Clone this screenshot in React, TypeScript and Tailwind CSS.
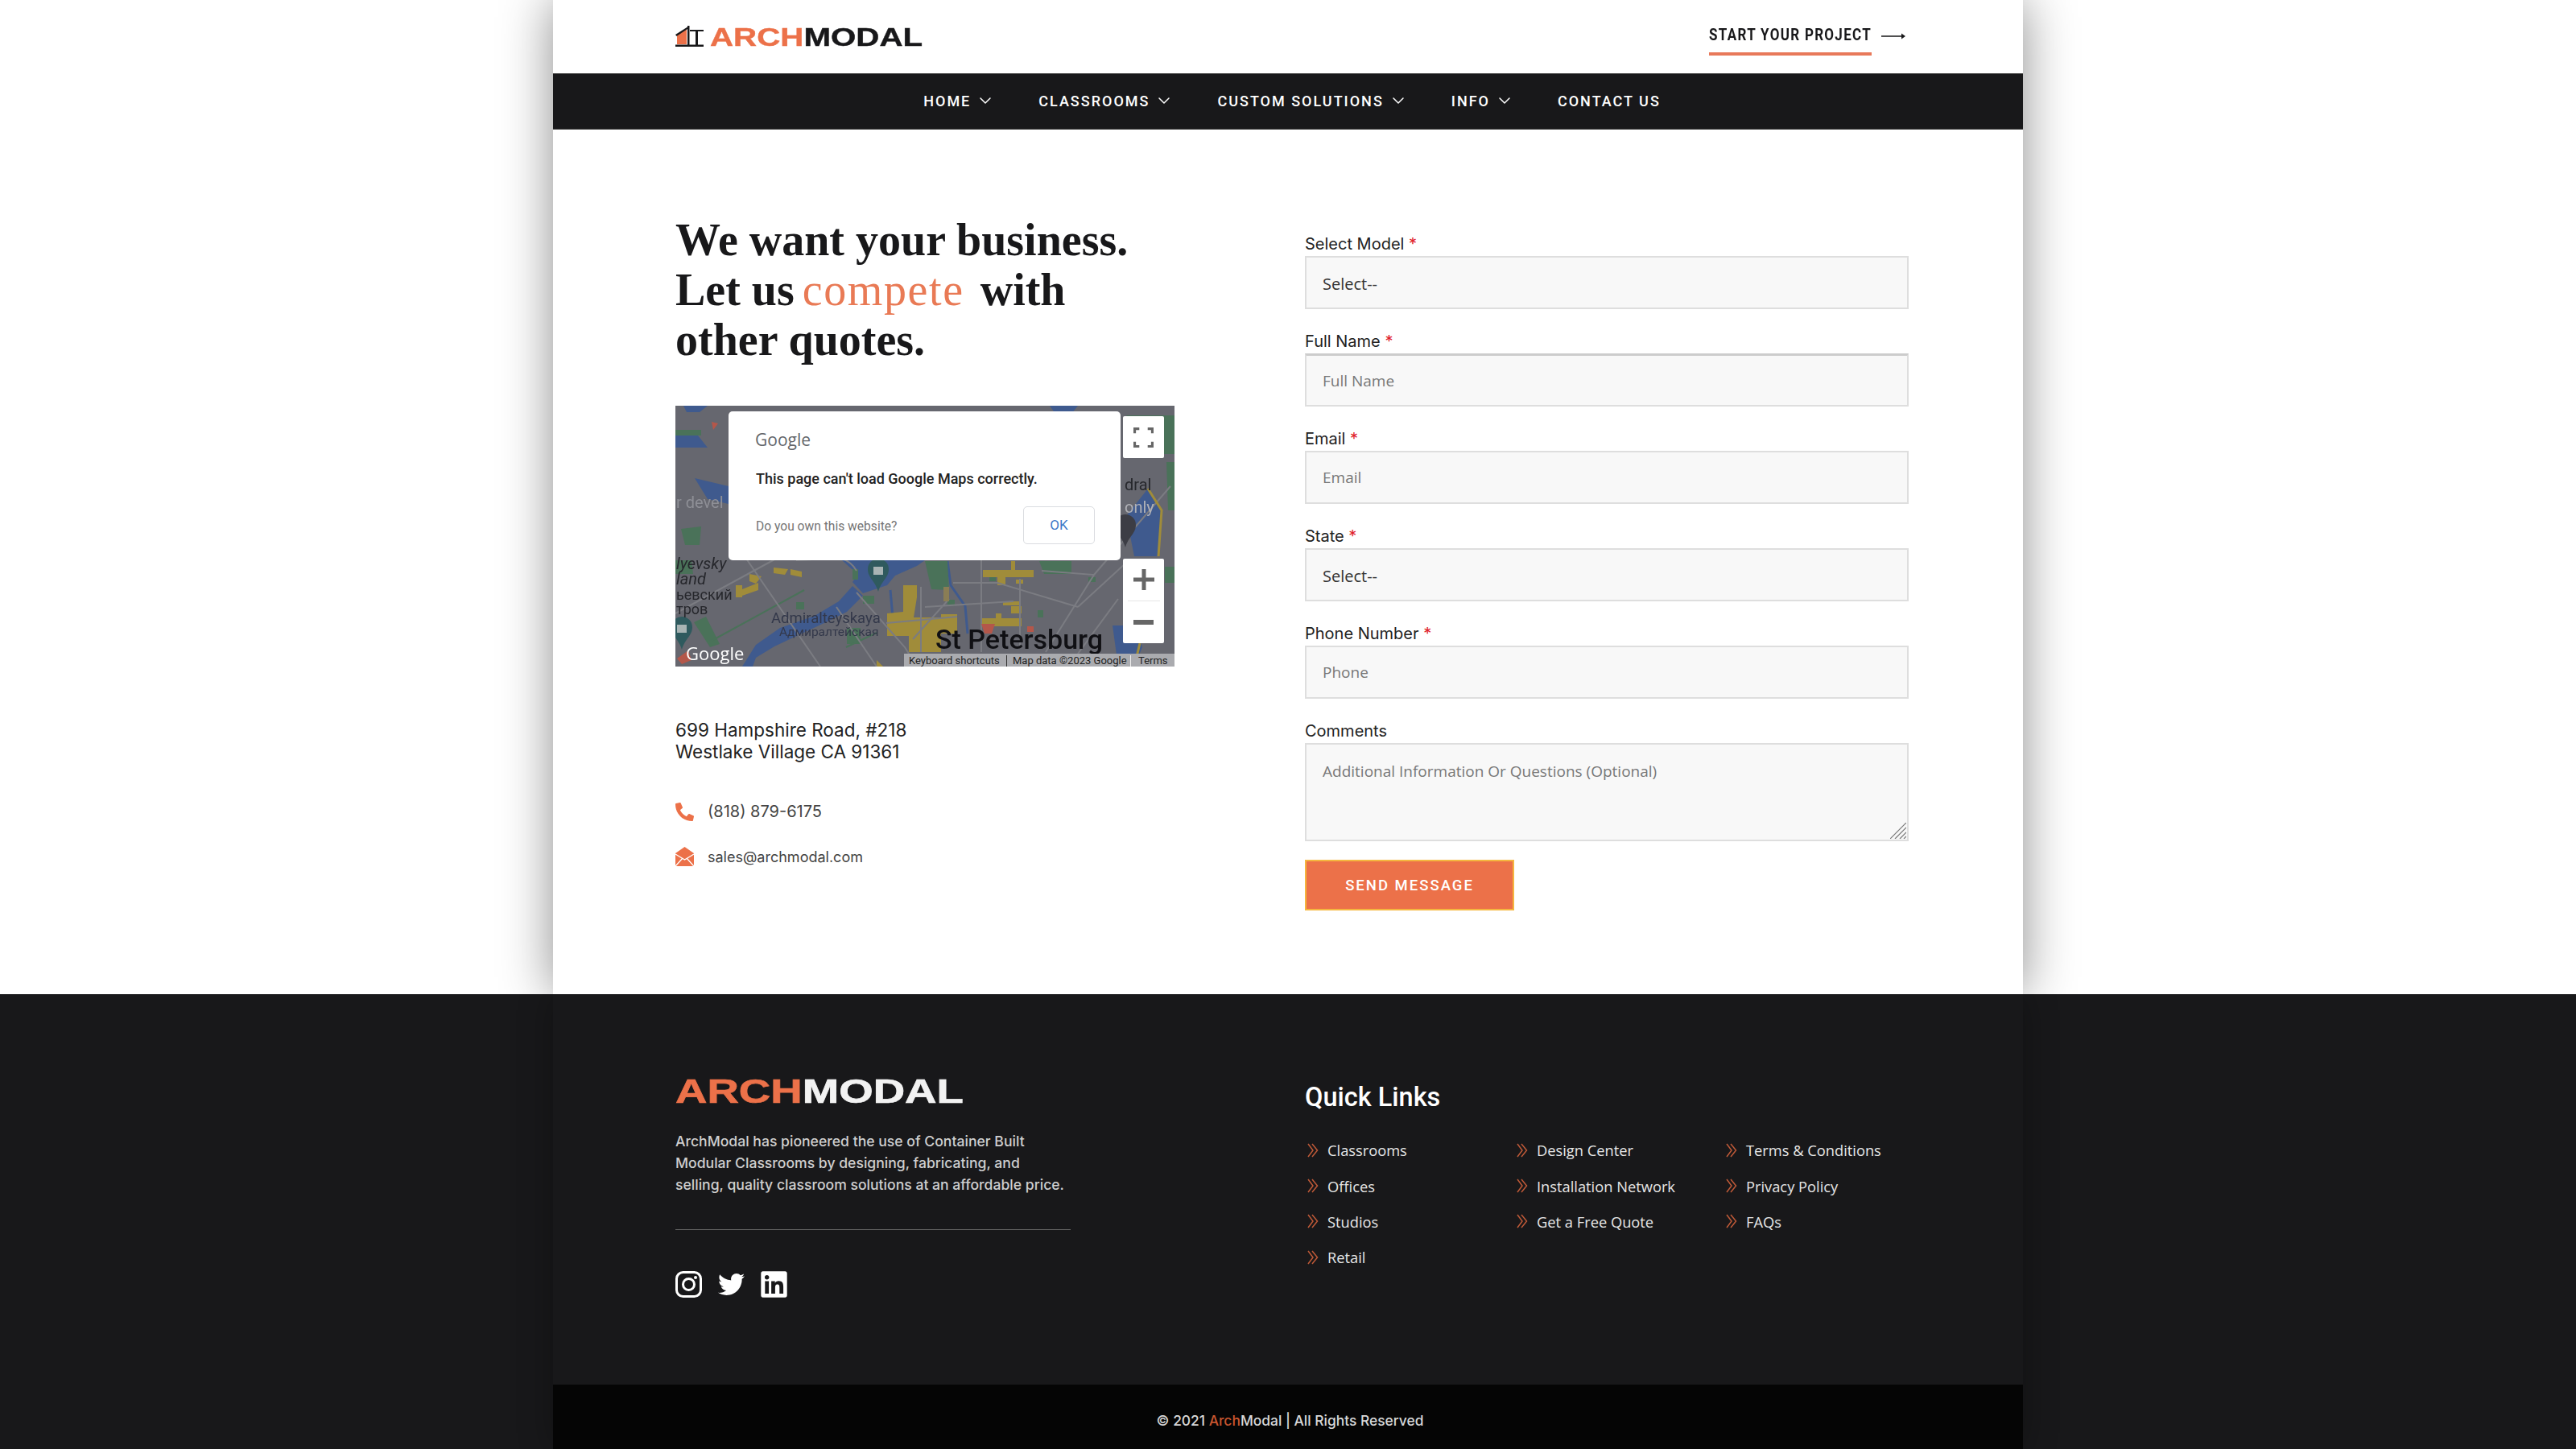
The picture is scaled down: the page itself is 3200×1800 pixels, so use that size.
import React from 'react'
import { ChevronDown } from 'lucide-react'
import { FaLinkedin, FaPhoneAlt, FaTwitter } from 'react-icons/fa'

const navItems = [
  { label: 'HOME', menu: true },
  { label: 'CLASSROOMS', menu: true },
  { label: 'CUSTOM SOLUTIONS', menu: true },
  { label: 'INFO', menu: true },
  { label: 'CONTACT US', menu: false },
]

const linkColumns = [
  ['Classrooms', 'Offices', 'Studios', 'Retail'],
  ['Design Center', 'Installation Network', 'Get a Free Quote'],
  ['Terms & Conditions', 'Privacy Policy', 'FAQs'],
]

const Logo: React.FC<{ dark?: boolean }> = ({ dark }) => {
  if (dark) {
    return (
      <div className="h-[30px] w-[357px] font-['Liberation_Sans',sans-serif] text-[42px] leading-[30px] font-bold whitespace-nowrap">
        <span className="inline-block origin-left scale-x-[1.3] [-webkit-text-stroke:0.7px_currentColor]">
          <span className="text-[#ec7149]">ARCH</span>
          <span className="text-[#f2f2f2]">MODAL</span>
        </span>
      </div>
    )
  }

  return (
    <div className="flex items-end gap-[8px]">
      <svg viewBox="0 0 35 26" className="h-[26px] w-[35px]">
        <path d="M2 23 V12 L14 4 V23 Z" fill="#ec7149" />
        <path d="M0 23.5 H35 V26 H0 Z M15 0 H17.5 V24 H15 Z M18 5 H35 V7 H18 Z M25 6 H28 V24 H25 Z M0 11 L15 1.5 V4 L1.5 13 Z" fill="#18181a" />
      </svg>
      <div className="h-[22px] w-[263px] font-['Liberation_Sans',sans-serif] text-[31px] leading-[22px] font-bold whitespace-nowrap">
        <span className="inline-block origin-left scale-x-[1.3] [-webkit-text-stroke:0.4px_currentColor]">
          <span className="text-[#ec7149]">ARCH</span>
          <span className="text-[#18181a]">MODAL</span>
        </span>
      </div>
    </div>
  )
}

const MapBackground = () => (
  <svg viewBox="0 0 620 324" className="block h-[324px] w-[620px] blur-[0.6px]">
    <rect width="620" height="324" fill="#66676f" />
    {/* water */}
    <g fill="#3f5a8e">
      <path d="M0 37 H28 L40 52 H0 Z M24 90 L66 100 V122 L40 116 Z" />
      <path d="M83 324 L100 297 L130 276 L173 261 L203 243 L220 224 L233 236 L213 256 L187 269 L157 283 L123 299 L100 313 L96 324 Z" />
      <path d="M207 192 H310 L300 199 L273 211 L263 223 L233 233 L220 219 L227 209 L217 201 Z" />
      <path d="M543 273 H573 L580 300 L570 324 H550 Z M587 103 L604 130 L600 187 H570 L560 137 Z" />
      <path d="M465 0 H500 L492 10 H472 Z M10 0 H40 L30 8 H14 Z" />
    </g>
    <g fill="none" stroke="#3f5a8e" strokeWidth="3">
      <path d="M338 193 L342 223 L360 249 L363 283" />
      <path d="M267 229 L270 263" />
    </g>
    {/* parks */}
    <g fill="#4a7259">
      <path d="M0 30 H32 V37 H0 Z M7 153 L32 150 L30 173 L12 173 Z M560 12 H620 V60 H600 Z M610 70 H620 V130 H612 Z" />
      <path d="M0 192 H20 L22 209 H0 Z M23 269 L38 262 L55 296 L43 300 Z M150 244 H160 V253 H150 Z M213 276 H230 V296 H213 Z M233 236 H247 V246 H233 Z M220 203 H227 V216 H220 Z" />
      <path d="M310 193 H338 L340 229 L318 228 Z M338 241 H347 V249 H338 Z M452 193 H492 V209 H458 Z M390 213 H398 V218 H390 Z M450 254 H457 V263 H450 Z M513 213 H522 V219 H513 Z M608 200 H620 V220 H608 Z" />
    </g>
    <path d="M43 293 L160 229 M212 300 L250 282" stroke="#4a7259" strokeWidth="2" />
    {/* buildings */}
    <g fill="#a08c3a">
      <path d="M75 223 H83 V238 H75 Z M83 228 L103 220 V229 L83 236 Z M92 209 L107 212 L100 221 L92 218 Z M122 201 L140 203 L136 210 L122 208 Z M143 203 L157 206 V213 L143 210 Z" />
      <path d="M283 223 H300 V238 L296 263 H310 V306 H290 V286 H263 V258 L283 256 Z" />
      <path d="M310 263 H330 V306 H310 Z M330 259 H350 V283 H330 Z" />
      <path d="M382 204 H445 V213 H382 Z M417 193 H422 V204 H417 Z M400 213 H410 V223 H400 Z M423 216 H432 V221 H423 Z" />
      <path d="M407 243 H427 V248 H407 Z M417 249 H430 V258 H417 Z M380 264 H430 V274 H380 Z M398 258 H405 V264 H398 Z" />
      <path d="M300 308 H320 V324 H300 Z M250 316 L258 324 H250 Z" />
    </g>
    {/* roads */}
    <g stroke="#7b7c82" strokeWidth="2" fill="none">
      <path d="M0 258 L125 190 M88 190 L180 324 M225 205 C210 180 190 192 150 192 M225 232 L285 300 L300 324 M200 250 L250 324 M345 220 L400 220 L500 250 M380 192 V306 M428 215 V300 M500 250 L560 195 M455 205 L520 210 L460 306 M520 210 L615 100 M550 240 L500 308 M310 250 L420 243 M262 270 L350 262 M295 290 L340 240 M305 225 V306" />
    </g>
    <path d="M333 225 H340 V243 H333 Z" fill="#8a7d55" />
    <path d="M380 271 H397 L393 283 H384 Z M437 274 H445 V281 H437 Z M2 314 L16 304 L20 316 L8 321 Z M45 20 L53 22 L47 30 Z" fill="#b4574a" />
    <path d="M587 103 L604 130 L600 187 M577 295 L570 324" fill="none" stroke="#a08c3a" strokeWidth="3" />
    {/* pins */}
    <path d="M252 190 a13 13 0 0 1 13 13 c0 11 -9 14 -13 28 c-4 -14 -13 -17 -13 -28 a13 13 0 0 1 13 -13 Z" fill="#2f5a5e" />
    <rect x="246" y="200" width="12" height="10" fill="#a8b4b4" />
    <path d="M8 262 a13 13 0 0 1 13 13 c0 11 -9 14 -13 28 c-4 -14 -13 -17 -13 -28 a13 13 0 0 1 13 -13 Z" fill="#2f5a5e" />
    <rect x="2" y="272" width="12" height="10" fill="#a8b4b4" />
    <path d="M559 135 a13 13 0 0 1 13 13 c0 11 -9 14 -13 28 c-4 -14 -13 -17 -13 -28 a13 13 0 0 1 13 -13 Z" fill="#3c3d45" />
    {/* labels */}
    <g className="font-['Roboto',sans-serif]">
      <text x="1" y="127" fontSize="20" fill="#8e8f96">r devel</text>
      <text x="1" y="203" fontSize="20" fontStyle="italic" fill="#26272c">lyevsky</text>
      <text x="1" y="222" fontSize="20" fontStyle="italic" fill="#26272c">land</text>
      <text x="1" y="241" fontSize="18" fill="#26272c">ьевский</text>
      <text x="1" y="259" fontSize="18" fill="#26272c">тров</text>
      <text x="119" y="270" fontSize="18.5" fill="#33384a">Admiralteyskaya</text>
      <text x="129" y="286" fontSize="15.5" fill="#33384a">Адмиралтейская</text>
      <text x="323" y="302" fontSize="34" fontWeight="500" fill="#101014">St Petersburg</text>
      <text x="558" y="105" fontSize="20" fill="#26272c">dral</text>
      <text x="558" y="133" fontSize="20" fill="#b0b1b6">only</text>
    </g>
    <text x="13" y="316" fontSize="22" fontWeight="500" fill="#ffffff" className="font-['Open_Sans',sans-serif]">Google</text>
  </svg>
)

const MapEmbed = () => (
  <div className="relative mt-[51px] h-[324px] w-[620px] overflow-hidden font-['Roboto',sans-serif]">
    <MapBackground />
    <div className="absolute top-[7px] left-[66px] h-[185px] w-[487px] rounded-[5px] bg-white">
      <div className="absolute top-[20px] left-[33px] font-['Open_Sans',sans-serif] text-[21px] leading-[30px] text-[#63666a]">Google</div>
      <div className="absolute top-[72px] left-[34px] text-[18px] leading-[24px] font-medium whitespace-nowrap text-[#222]">This page can't load Google Maps correctly.</div>
      <div className="absolute top-[133px] left-[34px] text-[15.6px] leading-[20px] text-[#757575]">Do you own this website?</div>
      <div className="absolute top-[118px] left-[366px] flex h-[47px] w-[89px] items-center justify-center rounded-[5px] border border-[#dadce0] text-[17px] text-[#3b78c8]">OK</div>
    </div>
    <div className="absolute top-[13px] left-[556px] flex h-[52px] w-[51px] items-center justify-center rounded-[2px] bg-white">
      <svg viewBox="0 0 24 24" className="h-[25px] w-[25px]" fill="none" stroke="#666" strokeWidth="3">
        <path d="M1.5 7 V1.5 H7 M17 1.5 H22.5 V7 M22.5 17 V22.5 H17 M7 22.5 H1.5 V17" />
      </svg>
    </div>
    <div className="absolute top-[190px] left-[556px] flex h-[105px] w-[51px] flex-col items-center rounded-[2px] bg-white">
      <div className="flex h-[52px] items-center">
        <svg viewBox="0 0 26 26" className="h-[26px] w-[26px]" fill="#666"><path d="M10.5 0 H15.5 V10.5 H26 V15.5 H15.5 V26 H10.5 V15.5 H0 V10.5 H10.5 Z" /></svg>
      </div>
      <div className="h-px w-[40px] bg-[#e6e6e6]" />
      <div className="flex h-[52px] items-center">
        <div className="h-[6px] w-[25px] bg-[#666]" />
      </div>
    </div>
    <div className="absolute right-0 bottom-0 flex h-[16px] w-[336px] items-center bg-[#aaabaf] pt-[2px] pl-[6px] text-[13px] leading-[14px] whitespace-nowrap text-[#222]">
      <span className="w-[121px]">Keyboard shortcuts</span>
      <span className="h-full w-px bg-[#333]" />
      <span className="ml-[7px] w-[146px]">Map data ©2023 Google</span>
      <span className="h-full w-px bg-[#eee]" />
      <span className="ml-[9px]">Terms</span>
    </div>
  </div>
)

const fieldClass =
  "block h-[66px] w-full border-2 border-[#dedede] bg-[#f8f8f8] px-[20px] font-['Open_Sans',sans-serif] text-[19px] text-[#333] outline-none placeholder:text-[#777]"

const Field: React.FC<{ label: string; required?: boolean; children: React.ReactNode }> = ({ label, required, children }) => (
  <div>
    <label className="mb-[4px] block h-[22px] font-['Inter',sans-serif] text-[20px] leading-[22px] text-[#222]">
      {label}
      {required && <span className="text-[#e0202a]"> *</span>}
    </label>
    {children}
  </div>
)

const SelectField = () => (
  <select className={`${fieldClass} appearance-none pt-[4px] text-[20px]`} defaultValue="">
    <option value="">Select--</option>
  </select>
)

const DoubleChevron = () => (
  <svg viewBox="0 0 14 18" className="h-[18px] w-[14px] shrink-0" fill="none" stroke="#c05a38" strokeWidth="1.5">
    <path d="M1 1 L7 9 L1 17 M6 1 L12.5 9 L6 17" />
  </svg>
)

export default function App() {
  return (
    <div className="min-h-[1800px] bg-white">
      <div className="mx-auto w-[1826px] bg-white shadow-[0_0_60px_rgba(0,0,0,0.45)]">
        <header className="flex h-[91px] items-start justify-between pr-[146px] pl-[152px]">
          <div className="pt-[32px]">
            <Logo />
          </div>
          <div className="flex items-start gap-[12px] pt-[31px]">
            <div className="h-[38px] w-[202px] border-b-4 border-[#e8795a] font-['Roboto',sans-serif] text-[21px] leading-[24px] font-bold tracking-[1.6px] whitespace-nowrap text-[#18181a]">
              <span className="inline-block origin-left scale-x-[0.81]">START YOUR PROJECT</span>
            </div>
            <svg viewBox="0 0 30 10" className="mt-[9px] h-[10px] w-[30px]" fill="#18181a">
              <path d="M0 4.3 H25 V1.5 L30 5 L25 8.5 V5.7 H0 Z" />
            </svg>
          </div>
        </header>

        <nav className="flex h-[70px] items-center justify-center gap-[54px] border-y border-[#444] bg-[#18181a] pb-[2px] pl-[10px] font-['Roboto',sans-serif] text-[18px] font-medium tracking-[2px] text-white">
          {navItems.map(({ label, menu }) => (
            <div key={label} className="flex items-center gap-[6px] whitespace-nowrap">
              {label}
              {menu && <ChevronDown size={24} strokeWidth={1.5} />}
            </div>
          ))}
        </nav>

        <main className="flex gap-[162px] pr-[142px] pb-[104px] pl-[152px]">
          <div className="w-[620px] pt-[106px]">
            <h1 className="font-['Liberation_Serif',serif] text-[56px] leading-[62px] font-bold text-[#18181a]">
              We want your business.
              <br />
              Let us <span className="mr-[-8px] ml-[-4px] font-normal tracking-[1.6px] text-[#e97a55]">compete</span>&nbsp; with
              <br />
              other quotes.
            </h1>
            <MapEmbed />
            <p className="mt-[65px] font-['Inter',sans-serif] text-[22.5px] leading-[27px] text-[#222]">
              699 Hampshire Road, #218
              <br />
              Westlake Village CA 91361
            </p>
            <div className="mt-[49px] flex h-[24px] items-center gap-[17px] font-['Inter',sans-serif] text-[20px] text-[#444]">
              <FaPhoneAlt className="h-[23px] w-[23px] text-[#ec7149]" />
              (818) 879-6175
            </div>
            <div className="mt-[32px] flex h-[24px] items-center gap-[17px] font-['Inter',sans-serif] text-[18px] text-[#444]">
              <svg viewBox="0 0 23 24" className="h-[24px] w-[23px]">
                <path d="M0 8 L11.5 0 L23 8 V24 H0 Z" fill="#ec7149" />
                <path d="M0 9 L11.5 16 L23 9 M0 24 L9 14 M23 24 L14 14" fill="none" stroke="#fff" strokeWidth="1.4" />
              </svg>
              sales@archmodal.com
            </div>
          </div>

          <form className="flex w-[750px] flex-col gap-[29px] pt-[131px]">
            <Field label="Select Model" required>
              <SelectField />
            </Field>
            <Field label="Full Name" required>
              <input className={`${fieldClass} border-t-[3px] border-t-[#ccc]`} placeholder="Full Name" />
            </Field>
            <Field label="Email" required>
              <input className={fieldClass} placeholder="Email" />
            </Field>
            <Field label="State" required>
              <SelectField />
            </Field>
            <Field label="Phone Number" required>
              <input className={fieldClass} placeholder="Phone" />
            </Field>
            <div>
              <Field label="Comments">
                <div className="relative">
                  <textarea
                    className="block h-[122px] w-full resize-none border-2 border-[#dedede] bg-[#f8f8f8] px-[20px] py-[20px] font-['Open_Sans',sans-serif] text-[19px] leading-[26px] text-[#333] outline-none placeholder:text-[#777]"
                    placeholder="Additional Information Or Questions (Optional)"
                  />
                  <svg viewBox="0 0 20 20" className="absolute right-[3px] bottom-[3px] h-[20px] w-[20px]" stroke="#777" strokeWidth="1.2">
                    <path d="M0 20 L20 0 M6 20 L20 6 M12 20 L20 12 M17 20 L20 17" />
                  </svg>
                </div>
              </Field>
              <button
                type="button"
                className="mt-[23px] h-[63px] w-[260px] border-2 border-[#f5b63f] bg-[#ec7149] pt-[2px] font-['Roboto',sans-serif] text-[18.5px] font-medium tracking-[2px] text-white"
              >
                SEND MESSAGE
              </button>
            </div>
          </form>
        </main>
      </div>

      <footer className="overflow-hidden bg-[#18181a]">
        <div className="mx-auto w-[1826px] shadow-[0_0_40px_rgba(0,0,0,0.3)]">
          <div className="flex h-[485px] gap-[162px] bg-[#18181a] pl-[152px]">
            <div className="w-[620px] pt-[106px]">
              <Logo dark />
              <p className="mt-[33px] w-[500px] font-['Inter',sans-serif] text-[17.6px] leading-[27px] font-medium text-[#cfcfcf]">
                ArchModal has pioneered the use of Container Built
                <br />
                Modular Classrooms by designing, fabricating, and
                <br />
                selling, quality classroom solutions at an affordable price.
              </p>
              <div className="mt-[42px] h-px w-[491px] bg-[#666]" />
              <div className="mt-[51px] flex h-[33px] items-center gap-[20px] text-white">
                <svg viewBox="0 0 33 33" className="h-[33px] w-[33px]" fill="none" stroke="currentColor" strokeWidth="3">
                  <rect x="1.5" y="1.5" width="30" height="30" rx="8" />
                  <circle cx="16.5" cy="16.5" r="7" />
                  <circle cx="25" cy="8" r="2" fill="currentColor" stroke="none" />
                </svg>
                <FaTwitter className="h-[33px] w-[33px]" />
                <FaLinkedin className="h-[37px] w-[33px]" />
              </div>
            </div>
            <div className="pt-[110px]">
              <h2 className="font-['Roboto',sans-serif] text-[32.5px] leading-[36px] font-medium text-white">Quick Links</h2>
              <div className="mt-[26px] flex">
                {linkColumns.map((links) => (
                  <ul key={links[0]} className="w-[260px]">
                    {links.map((link) => (
                      <li key={link} className="flex h-[44.2px] items-center gap-[11px] pl-[3px] font-['Open_Sans',sans-serif] text-[18.3px] text-[#e6e6e6]">
                        <DoubleChevron />
                        {link}
                      </li>
                    ))}
                  </ul>
                ))}
              </div>
            </div>
          </div>
          <div className="flex h-[80px] items-center justify-center bg-[#050505] pt-[10px] pl-[5px] font-['Inter',sans-serif] text-[17.4px] font-medium text-[#d8d8d8]">
            © 2021&nbsp;<span className="text-[#c9562f]">Arch</span>Modal | All Rights Reserved
          </div>
        </div>
      </footer>
    </div>
  )
}
